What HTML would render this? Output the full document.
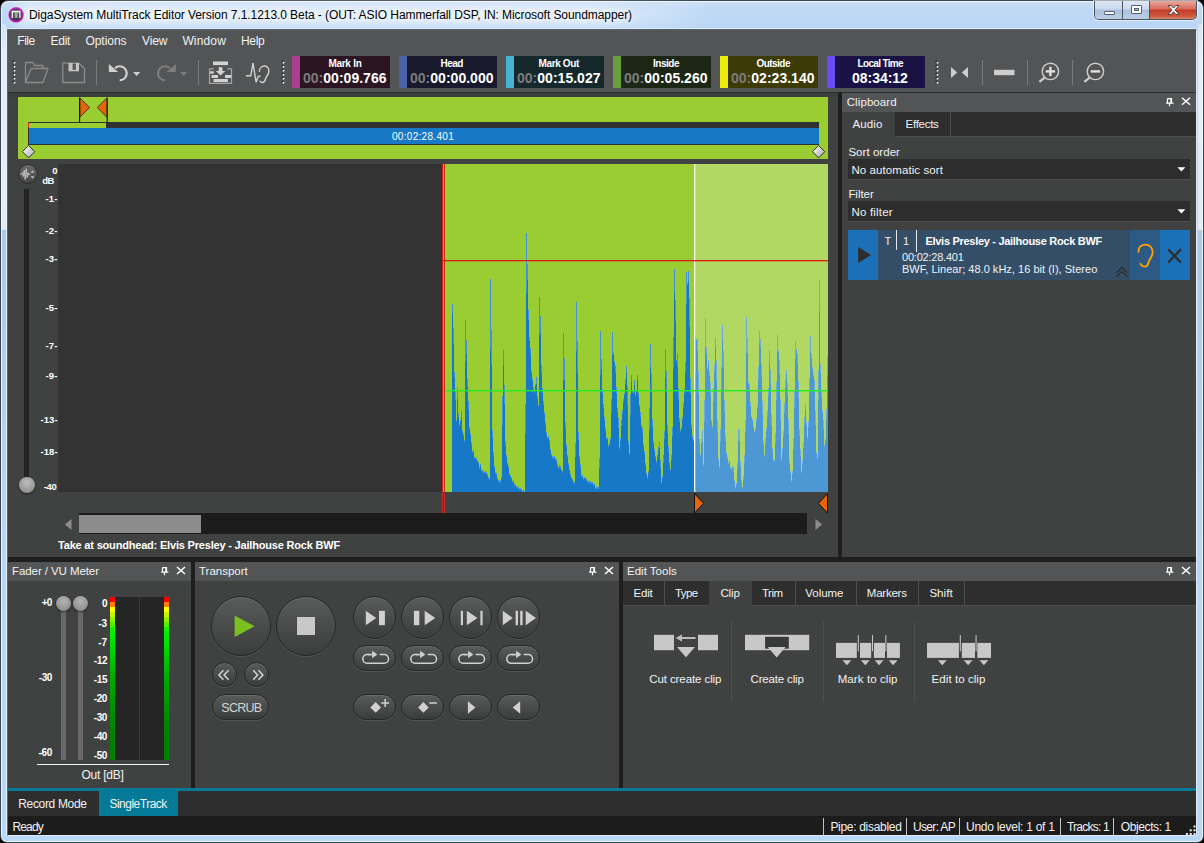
<!DOCTYPE html>
<html lang="en"><head><meta charset="utf-8"><title>DigaSystem MultiTrack Editor</title>
<style>
html,body{margin:0;padding:0;}
body{width:1204px;height:843px;background:#000;overflow:hidden;position:relative;font-family:"Liberation Sans",sans-serif;}
.b{position:absolute;box-sizing:border-box;display:block;}
.t{position:absolute;white-space:nowrap;line-height:1;display:block;}
#win{left:0;top:0;width:1204px;height:843px;border-radius:8px 8px 7px 7px;background:linear-gradient(180deg,#cfe1f5 0px,#bfd9f5 8px,#bad7f6 30px,#b9d7f7 300px,#b8d8f8 843px);border:1px solid #3a4654;box-shadow:inset 0 0 0 1px #eef5fc;}
</style></head><body>
<div class="b" id="win"></div>
<div class="b" style="left:14px;top:5px;width:700px;height:20px;border-radius:10px;background:linear-gradient(90deg,rgba(255,255,255,.62) 0,rgba(255,255,255,.62) 80%,rgba(255,255,255,0) 100%);filter:blur(6px);"></div>
<div class="b" style="left:2px;top:24px;width:4px;height:206px;background:linear-gradient(180deg,#d4e3f4 0,#e4edf8 30px,#e2ebf7 100%);"></div>
<div class="b" style="left:1198px;top:24px;width:4px;height:206px;background:linear-gradient(180deg,#d4e3f4 0,#e4edf8 30px,#e2ebf7 100%);"></div>
<div class="b" style="left:2px;top:230px;width:4px;height:330px;background:linear-gradient(180deg,#a9c9ec 0,#b8d8f8 100%);"></div>
<div class="b" style="left:1198px;top:230px;width:4px;height:330px;background:linear-gradient(180deg,#a9c9ec 0,#b8d8f8 100%);"></div>

<div class="b" style="left:7px;top:29px;width:1190px;height:807px;background:#404242;border:1px solid #5a6470;border-right-color:#dfeaf6;border-bottom-color:#dfeaf6;"></div>
<div class="b" style="left:6px;top:28px;width:1px;height:808px;background:#e6f0fb;"></div>
<div class="b" style="left:6px;top:28px;width:1191px;height:1px;background:#dbe8f7;"></div>
<svg class="b" style="left:6px;top:5px;" width="20" height="20" viewBox="0 0 20 20"><defs><radialGradient id="ig" cx="50%" cy="35%" r="65%"><stop offset="0" stop-color="#5e5c60"/><stop offset="1" stop-color="#333136"/></radialGradient></defs><circle cx="10.100" cy="9.800" r="7.900" fill="#e23ce2" fill-opacity="0.350"/><circle cx="10.100" cy="9.800" r="6.900" fill="url(#ig)" stroke="#c81cc8" stroke-width="1.500"/><rect x="8.700" y="7" width="2.900" height="5.900" fill="#a4a4a4"/><path d="M6.300 12.900V6.500h7.600v6.400" fill="none" stroke="#fff" stroke-width="1.300"/></svg>
<span class="t" id="t0" style="left:29px;top:9px;font-size:12px;color:#000;letter-spacing:-0.067px;text-shadow:0 0 6px #fff,0 0 10px #fff,0 0 14px #fff;">DigaSystem MultiTrack Editor Version 7.1.1213.0 Beta - (OUT: ASIO Hammerfall DSP, IN: Microsoft Soundmapper)</span>
<div class="b" style="left:1094px;top:1px;width:103px;height:19px;border:1px solid #4b5561;border-top:none;border-radius:0 0 5px 5px;overflow:hidden;box-shadow:0 0 0 1px rgba(255,255,255,.55);"><div class="b" style="left:0;top:0;width:28px;height:18px;background:linear-gradient(180deg,#dfe9f5 0,#c9d9ec 45%,#a9bfdb 50%,#bccfe6 100%);border-right:1px solid #4b5561;"></div><div class="b" style="left:28px;top:0;width:27px;height:18px;background:linear-gradient(180deg,#dfe9f5 0,#c9d9ec 45%,#a9bfdb 50%,#bccfe6 100%);border-right:1px solid #4b5561;"></div><div class="b" style="left:55px;top:0;width:47px;height:18px;background:linear-gradient(180deg,#e9a99c 0,#d8695a 45%,#c33a28 50%,#cf5a3e 85%,#d98a6a 100%);"></div></div>
<svg class="b" style="left:1094px;top:0px;" width="103" height="20" viewBox="0 0 103 20"><rect x="10.5" y="11.5" width="10" height="3" rx="0.5" fill="#fff" stroke="#52606f" stroke-width="1"/><rect x="37.5" y="5.5" width="10" height="8" rx="0.5" fill="#fff" stroke="#52606f" stroke-width="1"/><rect x="40.5" y="8.5" width="4" height="2" fill="#9fb4cf" stroke="#52606f" stroke-width="1"/><path d="M74 5.5h3.2l2.3 2.6 2.3-2.6H85l-3.9 4.4 3.9 4.6h-3.2l-2.3-2.8-2.3 2.8H74l3.9-4.6z" fill="#fff" stroke="#5a3a3a" stroke-width="1" stroke-linejoin="round"/></svg>
<div class="b" style="left:8px;top:30px;width:1188px;height:62px;background:#535455;"></div>
<div class="b" style="left:8px;top:92px;width:1188px;height:1px;background:#2a2b2b;"></div>
<span class="t" id="t1" style="left:17.3px;top:35px;font-size:12px;color:#f2f2f2;letter-spacing:-0.486px;">File</span>
<span class="t" id="t2" style="left:50.6px;top:35px;font-size:12px;color:#f2f2f2;letter-spacing:-0.322px;">Edit</span>
<span class="t" id="t3" style="left:85.4px;top:35px;font-size:12px;color:#f2f2f2;letter-spacing:-0.023px;">Options</span>
<span class="t" id="t4" style="left:142px;top:35px;font-size:12px;color:#f2f2f2;letter-spacing:-0.124px;">View</span>
<span class="t" id="t5" style="left:182.4px;top:35px;font-size:12px;color:#f2f2f2;letter-spacing:0.152px;">Window</span>
<span class="t" id="t6" style="left:241px;top:35px;font-size:12px;color:#f2f2f2;letter-spacing:-0.297px;">Help</span>
<div class="b" style="left:292px;top:56px;width:98px;height:32px;background:#2b1522;"></div>
<div class="b" style="left:292px;top:56px;width:8px;height:32px;background:#a8408e;"></div>
<div class="b" style="left:399px;top:56px;width:98px;height:32px;background:#181a2c;"></div>
<div class="b" style="left:399px;top:56px;width:8px;height:32px;background:#4a62ac;"></div>
<div class="b" style="left:506px;top:56px;width:98px;height:32px;background:#15292c;"></div>
<div class="b" style="left:506px;top:56px;width:8px;height:32px;background:#46b4d2;"></div>
<div class="b" style="left:613px;top:56px;width:98px;height:32px;background:#1c2614;"></div>
<div class="b" style="left:613px;top:56px;width:8px;height:32px;background:#6a9e3a;"></div>
<div class="b" style="left:720px;top:56px;width:98px;height:32px;background:#3c3a06;"></div>
<div class="b" style="left:720px;top:56px;width:8px;height:32px;background:#ecec10;"></div>
<div class="b" style="left:827px;top:56px;width:98px;height:32px;background:#1a1244;"></div>
<div class="b" style="left:827px;top:56px;width:8px;height:32px;background:#6a4cf6;"></div>
<svg class="b" style="left:0px;top:0px;" width="1204" height="100" viewBox="0 0 1204 100"><rect x="12.5" y="60.7" width="2" height="2" fill="#26282a"/><rect x="13.7" y="61.9" width="1.600" height="1.600" fill="#fff"/><rect x="12.5" y="64.7" width="2" height="2" fill="#26282a"/><rect x="13.7" y="65.9" width="1.600" height="1.600" fill="#fff"/><rect x="12.5" y="68.7" width="2" height="2" fill="#26282a"/><rect x="13.7" y="69.9" width="1.600" height="1.600" fill="#fff"/><rect x="12.5" y="72.7" width="2" height="2" fill="#26282a"/><rect x="13.7" y="73.9" width="1.600" height="1.600" fill="#fff"/><rect x="12.5" y="76.7" width="2" height="2" fill="#26282a"/><rect x="13.7" y="77.9" width="1.600" height="1.600" fill="#fff"/><rect x="12.5" y="80.7" width="2" height="2" fill="#26282a"/><rect x="13.7" y="81.9" width="1.600" height="1.600" fill="#fff"/><rect x="281.5" y="60.7" width="2" height="2" fill="#26282a"/><rect x="282.7" y="61.9" width="1.600" height="1.600" fill="#fff"/><rect x="281.5" y="64.7" width="2" height="2" fill="#26282a"/><rect x="282.7" y="65.9" width="1.600" height="1.600" fill="#fff"/><rect x="281.5" y="68.7" width="2" height="2" fill="#26282a"/><rect x="282.7" y="69.9" width="1.600" height="1.600" fill="#fff"/><rect x="281.5" y="72.7" width="2" height="2" fill="#26282a"/><rect x="282.7" y="73.9" width="1.600" height="1.600" fill="#fff"/><rect x="281.5" y="76.7" width="2" height="2" fill="#26282a"/><rect x="282.7" y="77.9" width="1.600" height="1.600" fill="#fff"/><rect x="281.5" y="80.7" width="2" height="2" fill="#26282a"/><rect x="282.7" y="81.9" width="1.600" height="1.600" fill="#fff"/><rect x="935.5" y="60.7" width="2" height="2" fill="#26282a"/><rect x="936.7" y="61.9" width="1.600" height="1.600" fill="#fff"/><rect x="935.5" y="64.7" width="2" height="2" fill="#26282a"/><rect x="936.7" y="65.9" width="1.600" height="1.600" fill="#fff"/><rect x="935.5" y="68.7" width="2" height="2" fill="#26282a"/><rect x="936.7" y="69.9" width="1.600" height="1.600" fill="#fff"/><rect x="935.5" y="72.7" width="2" height="2" fill="#26282a"/><rect x="936.7" y="73.9" width="1.600" height="1.600" fill="#fff"/><rect x="935.5" y="76.7" width="2" height="2" fill="#26282a"/><rect x="936.7" y="77.9" width="1.600" height="1.600" fill="#fff"/><rect x="935.5" y="80.7" width="2" height="2" fill="#26282a"/><rect x="936.7" y="81.9" width="1.600" height="1.600" fill="#fff"/><path d="M25.5 82.5V62.5h7.5l1.5 3h8.5v3.5M25.5 82.5l5.5-14h17l-5 14z" fill="none" stroke="#8a8a8a" stroke-width="1.3" stroke-linejoin="round"/><path d="M62.8 63.2h16.2l5.5 5.3v14h-21.7z" fill="none" stroke="#8a8a8a" stroke-width="1.3"/><rect x="68.5" y="63" width="10.5" height="8.3" fill="#c4c4c4"/><rect x="72.6" y="63.5" width="3.2" height="6.3" fill="#535455"/><rect x="96" y="60" width="1" height="25" fill="#777878"/><rect x="198" y="60" width="1" height="25" fill="#777878"/><rect x="982" y="60" width="1" height="25" fill="#777878"/><rect x="1027" y="60" width="1" height="25" fill="#777878"/><rect x="1072" y="60" width="1" height="25" fill="#777878"/><path d="M115 68.100A7 7 0 1 1 119.700 80.300" fill="none" stroke="#d0d0d0" stroke-width="2.100"/><path d="M108.900 64v8.100h9.200z" fill="#d0d0d0"/><path d="M133.100 72h7.200l-3.600 4z" fill="#d0d0d0"/><path d="M169.700 68.100A7 7 0 1 0 165 80.300" fill="none" stroke="#7d7d7d" stroke-width="2.100"/><path d="M175.800 64v8.100h-9.200z" fill="#7d7d7d"/><path d="M180.100 72h7.200l-3.600 4z" fill="#7d7d7d"/><rect x="213" y="61.500" width="15" height="3.600" fill="#d2d2d2"/><path d="M213.800 68.800h-4.300v14.600h22v-14.600h-4.300" fill="none" stroke="#a4a4a4" stroke-width="1.200"/><path d="M218.700 67.200h3.700v3.800h3l-4.850 4.400-4.850-4.400h3z" fill="#d2d2d2"/><rect x="210" y="71.300" width="3.800" height="2.300" fill="#d2d2d2"/><rect x="211.600" y="75" width="6.400" height="3" fill="#d2d2d2"/><rect x="225" y="75" width="6.200" height="3" fill="#d2d2d2"/><rect x="213.500" y="79" width="14.500" height="3.100" fill="#d2d2d2"/><path d="M246 75.800h4.800l2.200-12.600 3.100 19 2-5.700 2.400-0.700" fill="none" stroke="#d2d2d2" stroke-width="1.400" stroke-linejoin="miter"/><path d="M259.400 71.200c0.200-6.700 9.600-7 9.500 0c-0.100 3.600-2.400 4.500-3.200 7c-0.700 2.400-0.900 4.200-3.200 4.300c-1.200 0-2-0.500-2.400-1.300" fill="none" stroke="#d2d2d2" stroke-width="1.400" stroke-linecap="round"/><path d="M951 67l6.200 5.500-6.200 5.500zM968 67l-6.200 5.500 6.200 5.500z" fill="#cdcdcd"/><rect x="994" y="69.800" width="20.5" height="5.400" fill="#cdcdcd"/><circle cx="1050.4" cy="71.4" r="8.2" fill="none" stroke="#cdcdcd" stroke-width="1.4"/><path d="M1045.2 77.200l-5.800 4.600" stroke="#cdcdcd" stroke-width="2.2" fill="none"/><rect x="1045.7" y="70.2" width="9.4" height="2.4" fill="#e0e0e0"/><rect x="1049.2" y="66.700" width="2.4" height="9.4" fill="#e0e0e0"/><circle cx="1095.4" cy="71.4" r="8.2" fill="none" stroke="#cdcdcd" stroke-width="1.4"/><path d="M1090.2 77.200l-5.800 4.600" stroke="#cdcdcd" stroke-width="2.2" fill="none"/><rect x="1090.7" y="70.2" width="9.4" height="2.4" fill="#e0e0e0"/></svg>
<span class="t" id="t7" style="left:328.4px;top:59px;font-size:10px;color:#fff;font-weight:bold;letter-spacing:-0.274px;">Mark In</span>
<span class="t" id="t8" style="left:303px;top:71px;font-size:14px;color:#fff;font-weight:bold;letter-spacing:0.017px;"><span style="color:#7c7c7c">00:</span>00:09.766</span>
<span class="t" id="t9" style="left:440.5px;top:59px;font-size:10px;color:#fff;font-weight:bold;letter-spacing:-0.563px;">Head</span>
<span class="t" id="t10" style="left:410px;top:71px;font-size:14px;color:#fff;font-weight:bold;letter-spacing:0.017px;"><span style="color:#7c7c7c">00:</span>00:00.000</span>
<span class="t" id="t11" style="left:538.5px;top:59px;font-size:10px;color:#fff;font-weight:bold;letter-spacing:-0.355px;">Mark Out</span>
<span class="t" id="t12" style="left:517px;top:71px;font-size:14px;color:#fff;font-weight:bold;letter-spacing:0.017px;"><span style="color:#7c7c7c">00:</span>00:15.027</span>
<span class="t" id="t13" style="left:653px;top:59px;font-size:10px;color:#fff;font-weight:bold;letter-spacing:-0.484px;">Inside</span>
<span class="t" id="t14" style="left:624px;top:71px;font-size:14px;color:#fff;font-weight:bold;letter-spacing:0.017px;"><span style="color:#7c7c7c">00:</span>00:05.260</span>
<span class="t" id="t15" style="left:756.4px;top:59px;font-size:10px;color:#fff;font-weight:bold;letter-spacing:-0.519px;">Outside</span>
<span class="t" id="t16" style="left:731px;top:71px;font-size:14px;color:#fff;font-weight:bold;letter-spacing:0.017px;"><span style="color:#7c7c7c">00:</span>02:23.140</span>
<span class="t" id="t17" style="left:857.5px;top:59px;font-size:10px;color:#fff;font-weight:bold;letter-spacing:-0.656px;">Local Time</span>
<span class="t" id="t18" style="left:852px;top:71px;font-size:14px;color:#fff;font-weight:bold;letter-spacing:-0.031px;">08:34:12</span>
<div class="b" style="left:8px;top:93px;width:830px;height:4px;background:#3c3e3e;"></div>
<div class="b" style="left:18px;top:97px;width:810px;height:62px;background:#9acd32;"></div>
<div class="b" style="left:28px;top:121.5px;width:791px;height:23px;background:#303232;"></div>
<div class="b" style="left:29px;top:122.5px;width:76.5px;height:5px;background:#9acd32;"></div>
<div class="b" style="left:29px;top:127.5px;width:790px;height:16.5px;background:#1878c8;"></div>
<span class="t" id="t19" style="left:392px;top:132px;font-size:10px;color:#fff;letter-spacing:0.301px;">00:02:28.401</span>
<svg class="b" style="left:0px;top:90px;" width="1204" height="75" viewBox="0 90 1204 75"><rect x="28" y="122.500" width="1" height="5" fill="#e03010"/><path d="M79.600 97.500v25M107.200 97.500v25" stroke="#111" stroke-width="1.100"/><path d="M80 98l9.600 9.500-9.600 9.500z" fill="#e8640a" stroke="#111" stroke-width="0.700"/><path d="M106.800 98l-9.600 9.500 9.600 9.500z" fill="#e8640a" stroke="#111" stroke-width="0.700"/><defs><linearGradient id="dg" x1="0" y1="0" x2="1" y2="1"><stop offset="0.200" stop-color="#f4f4f4"/><stop offset="0.500" stop-color="#d0d0d0"/><stop offset="0.900" stop-color="#b4b4b4"/></linearGradient></defs><path d="M28.6 145.500l6.200 6.200-6.200 6.200-6.200-6.200z" fill="url(#dg)" stroke="#1c1c1c" stroke-width="0.900"/><path d="M818.6 145.500l6.200 6.200-6.200 6.200-6.200-6.200z" fill="url(#dg)" stroke="#1c1c1c" stroke-width="0.900"/></svg>
<div class="b" style="left:58px;top:164px;width:770px;height:328px;background:#333333;"></div>
<div class="b" style="left:443px;top:164px;width:385px;height:328px;background:#9acd32;"></div>
<svg class="b" style="left:0px;top:160px;" width="1204" height="360" viewBox="0 160 1204 360"><path d="M452 492V304h1V328h1V372h1V390h1V420h1V387h1V413h1V424h1V420h1V410h1V430h1V434h1V440h1V320h1V340h1V379h1V401h1V427h1V433h1V442h1V451h1V450h1V457h1V457h1V458h1V460h1V462h1V467h1V464h1V469h1V470h1V471h1V472h1V471h1V472h1V474h1V477h1V478h1V279h1V330h1V430h1V452h1V466h1V472h1V473h1V478h1V480h1V481h1V480h1V477h1V396h1V350h1V385h1V441h1V455h1V462h1V466h1V473h1V475h1V477h1V481h1V480h1V484h1V484h1V486h1V486h1V487h1V488h1V488h1V489h1V490h1V490h1V491h1V404h1V233h1V264h1V310h1V337h1V348h1V370h1V378h1V387h1V391h1V384h1V377h1V396h1V405h1V297h1V316h1V365h1V388h1V401h1V412h1V422h1V432h1V437h1V436h1V440h1V449h1V454h1V456h1V457h1V456h1V458h1V459h1V464h1V467h1V465h1V466h1V469h1V471h1V333h1V358h1V422h1V444h1V455h1V463h1V469h1V474h1V477h1V479h1V481h1V482h1V443h1V302h1V341h1V432h1V456h1V464h1V475h1V475h1V478h1V477h1V477h1V479h1V480h1V481h1V481h1V481h1V482h1V482h1V484h1V483h1V488h1V486h1V487h1V487h1V458h1V331h1V359h1V389h1V404h1V417h1V428h1V437h1V438h1V445h1V443h1V438h1V399h1V332h1V352h1V361h1V366h1V387h1V408h1V418h1V447h1V438h1V420h1V410h1V399h1V393h1V379h1V366h1V386h1V441h1V453h1V394h1V375h1V391h1V391h1V380h1V394h1V390h1V375h1V393h1V405h1V412h1V425h1V428h1V444h1V451h1V463h1V473h1V477h1V471h1V408h1V344h1V374h1V419h1V441h1V449h1V456h1V461h1V455h1V447h1V442h1V460h1V482h1V476h1V455h1V431h1V349h1V371h1V425h1V446h1V462h1V469h1V455h1V427h1V337h1V269h1V300h1V360h1V354h1V388h1V418h1V430h1V427h1V417h1V403h1V389h1V362h1V272h1V283h1V271h1V298h1V378h1V425h1V436h1V440h1V440h1V337h1V339h1V339h1V371h1V439h1V454h1V439h1V430h1V464h1V400h1V318h1V347h1V368h1V360h1V372h1V382h1V420h1V426h1V388h1V364h1V338h1V360h1V420h1V458h1V466h1V429h1V367h1V325h1V351h1V400h1V435h1V452h1V457h1V462h1V460h1V467h1V468h1V466h1V467h1V480h1V487h1V483h1V463h1V429h1V430h1V461h1V480h1V487h1V476h1V455h1V420h1V317h1V338h1V382h1V384h1V402h1V416h1V419h1V426h1V431h1V428h1V418h1V405h1V366h1V331h1V339h1V364h1V401h1V441h1V455h1V438h1V428h1V411h1V388h1V350h1V370h1V414h1V448h1V459h1V460h1V433h1V382h1V335h1V350h1V360h1V399h1V459h1V448h1V431h1V403h1V380h1V370h1V383h1V419h1V461h1V471h1V480h1V471h1V438h1V391h1V341h1V349h1V354h1V381h1V429h1V449h1V471h1V460h1V442h1V417h1V404h1V422h1V437h1V421h1V378h1V336h1V354h1V367h1V373h1V380h1V411h1V452h1V457h1V370h1V280h1V364h1V391h1V410h1V420h1V445h1V439h1V409h1V356h1V492z" fill="#3f94dc"/><path d="M452 492V313h1V344h1V378h1V400h1V422h1V399h1V417h1V426h1V422h1V417h1V432h1V436h1V442h1V362h1V354h1V387h1V410h1V429h1V436h1V445h1V453h1V452h1V459h1V459h1V460h1V462h1V464h1V469h1V466h1V471h1V472h1V473h1V474h1V473h1V474h1V476h1V479h1V480h1V349h1V365h1V438h1V457h1V468h1V474h1V475h1V480h1V482h1V483h1V482h1V479h1V425h1V366h1V404h1V446h1V457h1V464h1V468h1V475h1V477h1V479h1V483h1V482h1V486h1V486h1V488h1V488h1V489h1V490h1V490h1V491h1V492h1V492h1V492h1V434h1V293h1V280h1V320h1V341h1V355h1V373h1V381h1V389h1V393h1V386h1V384h1V399h1V407h1V335h1V333h1V373h1V393h1V405h1V415h1V425h1V434h1V439h1V438h1V443h1V451h1V456h1V458h1V459h1V458h1V460h1V461h1V466h1V469h1V467h1V468h1V471h1V473h1V381h1V380h1V429h1V447h1V457h1V465h1V471h1V476h1V479h1V481h1V483h1V484h1V457h1V351h1V373h1V440h1V459h1V468h1V477h1V477h1V480h1V479h1V479h1V481h1V482h1V483h1V483h1V483h1V484h1V484h1V486h1V485h1V490h1V488h1V489h1V489h1V468h1V375h1V369h1V394h1V408h1V421h1V431h1V439h1V440h1V447h1V445h1V440h1V413h1V355h1V355h1V363h1V373h1V394h1V412h1V428h1V449h1V441h1V426h1V413h1V403h1V395h1V384h1V373h1V405h1V445h1V455h1V415h1V382h1V393h1V393h1V385h1V396h1V392h1V381h1V397h1V407h1V417h1V427h1V433h1V447h1V455h1V466h1V475h1V479h1V473h1V430h1V367h1V390h1V427h1V444h1V451h1V458h1V463h1V457h1V450h1V448h1V468h1V484h1V478h1V463h1V439h1V378h1V390h1V433h1V452h1V465h1V471h1V460h1V436h1V369h1V293h1V321h1V362h1V366h1V399h1V422h1V432h1V429h1V420h1V408h1V394h1V372h1V304h1V285h1V281h1V326h1V394h1V429h1V438h1V442h1V442h1V373h1V341h1V350h1V394h1V444h1V456h1V444h1V442h1V466h1V422h1V347h1V354h1V370h1V364h1V376h1V395h1V422h1V428h1V402h1V372h1V347h1V381h1V433h1V461h1V468h1V442h1V389h1V340h1V368h1V412h1V441h1V454h1V459h1V464h1V462h1V469h1V470h1V468h1V472h1V482h1V489h1V485h1V470h1V441h1V441h1V467h1V483h1V489h1V480h1V463h1V432h1V353h1V353h1V384h1V390h1V407h1V418h1V421h1V428h1V433h1V430h1V422h1V409h1V380h1V343h1V348h1V377h1V415h1V446h1V457h1V444h1V431h1V417h1V396h1V363h1V385h1V426h1V452h1V461h1V462h1V443h1V400h1V352h1V353h1V374h1V420h1V461h1V452h1V437h1V413h1V388h1V374h1V395h1V434h1V464h1V474h1V482h1V474h1V450h1V408h1V359h1V351h1V363h1V398h1V436h1V456h1V473h1V464h1V448h1V425h1V410h1V427h1V439h1V427h1V393h1V351h1V359h1V369h1V376h1V391h1V425h1V454h1V459h1V400h1V311h1V373h1V398h1V413h1V429h1V447h1V441h1V419h1V375h1V492z" fill="#1878c8"/><rect x="694" y="164" width="134" height="328" fill="#ffffff" fill-opacity="0.235"/><rect x="694" y="164" width="1.3" height="328" fill="#f4f8e8"/><rect x="443" y="390" width="385" height="1.4" fill="#22ee22"/><rect x="443" y="260" width="385" height="1.300" fill="#e01808"/><rect x="442" y="164" width="1" height="328" fill="#d81c10"/><rect x="444" y="164" width="1" height="328" fill="#d02818"/><rect x="442" y="493" width="1" height="20" fill="#c82820"/><rect x="444" y="493" width="1" height="20" fill="#c82820"/><path d="M694.500 493.500l9 9.800-9 9.800z" fill="#e8640a" stroke="#111" stroke-width="1"/><path d="M827.500 493.500l-9 9.800 9 9.800z" fill="#e8640a" stroke="#111" stroke-width="1"/></svg>
<span class="t" id="t20" style="left:52.3px;top:166px;font-size:9.5px;color:#fff;font-weight:bold;letter-spacing:-0.297px;">0</span>
<span class="t" id="t21" style="left:42.3px;top:176px;font-size:9.5px;color:#fff;font-weight:bold;letter-spacing:-0.586px;">dB</span>
<span class="t" id="t22" style="left:45.5px;top:194px;font-size:9.5px;color:#fff;font-weight:bold;letter-spacing:0.192px;">-1-</span>
<span class="t" id="t23" style="left:45.5px;top:226px;font-size:9.5px;color:#fff;font-weight:bold;letter-spacing:0.192px;">-2-</span>
<span class="t" id="t24" style="left:45.5px;top:254px;font-size:9.5px;color:#fff;font-weight:bold;letter-spacing:0.192px;">-3-</span>
<span class="t" id="t25" style="left:45.5px;top:303px;font-size:9.5px;color:#fff;font-weight:bold;letter-spacing:0.192px;">-5-</span>
<span class="t" id="t26" style="left:45.5px;top:341px;font-size:9.5px;color:#fff;font-weight:bold;letter-spacing:0.192px;">-7-</span>
<span class="t" id="t27" style="left:45.5px;top:371px;font-size:9.5px;color:#fff;font-weight:bold;letter-spacing:0.192px;">-9-</span>
<span class="t" id="t28" style="left:40.4px;top:415px;font-size:9.5px;color:#fff;font-weight:bold;letter-spacing:0.098px;">-13-</span>
<span class="t" id="t29" style="left:40.4px;top:447px;font-size:9.5px;color:#fff;font-weight:bold;letter-spacing:0.098px;">-18-</span>
<span class="t" id="t30" style="left:43.7px;top:482px;font-size:9.5px;color:#fff;font-weight:bold;letter-spacing:-0.311px;">-40</span>
<div class="b" style="left:24px;top:189px;width:5px;height:299px;background:#232323;"></div>
<div class="b" style="left:19px;top:477px;width:16px;height:16px;border-radius:50%;background:radial-gradient(circle at 50% 35%,#bdbdbd 0,#9a9a9a 60%,#7e7e7e 100%);box-shadow:0 1px 2px rgba(0,0,0,.6);"></div>
<div class="b" style="left:18px;top:164px;width:20px;height:20px;border-radius:50%;background:linear-gradient(180deg,#6c6c6c 0,#565656 50%,#444 100%);border:1.500px solid #2a2a2a;"></div>
<svg class="b" style="left:18px;top:164px;" width="20" height="20" viewBox="0 0 20 20"><path d="M2.400 10.200h1.200l0.800-1.600 0.900 4 0.900-6.500 1 9.500 1-11 1 9 0.900-5 0.800 2.500 0.700-1h0.800" fill="none" stroke="#c8c8c8" stroke-width="0.900" stroke-linejoin="round"/><path d="M14.500 6.200l1.900 2.600h-3.800zM14.500 14.800l1.900-2.600h-3.800z" fill="#c0c0c0"/></svg>
<div class="b" style="left:79px;top:513px;width:728px;height:21px;background:#1c1c1c;"></div>
<div class="b" style="left:79px;top:515px;width:122px;height:18px;background:#8c8c8c;"></div>
<svg class="b" style="left:60px;top:514px;" width="770" height="20" viewBox="0 0 770 20"><path d="M11.500 5l-6.500 5.500 6.500 5.500z" fill="#8c8c8c"/><path d="M755.500 5l6.500 5.500-6.500 5.500z" fill="#8c8c8c"/></svg>
<span class="t" id="t31" style="left:58px;top:540px;font-size:11px;color:#fff;font-weight:bold;letter-spacing:-0.189px;">Take at soundhead: Elvis Presley - Jailhouse Rock BWF</span>
<div class="b" style="left:838px;top:93px;width:4px;height:464px;background:#1e1e1e;"></div>
<div class="b" style="left:8px;top:557px;width:1188px;height:5px;background:#1e1e1e;"></div>
<div class="b" style="left:842px;top:93px;width:354px;height:464px;background:#404242;"></div>
<div class="b" style="left:842px;top:93px;width:354px;height:19px;background:#535455;"></div>
<span class="t" id="t32" style="left:846.7px;top:97px;font-size:11.5px;color:#f2f2f2;letter-spacing:0.096px;">Clipboard</span>
<div class="b" style="left:842px;top:112px;width:354px;height:25px;background:#2e2e2e;border-bottom:1px solid #4c4d4d;"></div>
<div class="b" style="left:842px;top:112px;width:53px;height:25px;background:#404242;"></div>
<div class="b" style="left:950px;top:112px;width:1px;height:24px;background:#4c4d4d;"></div>
<span class="t" id="t33" style="left:852.4px;top:119px;font-size:11.5px;color:#f2f2f2;letter-spacing:0.156px;">Audio</span>
<span class="t" id="t34" style="left:905.5px;top:119px;font-size:11.5px;color:#f2f2f2;letter-spacing:-0.265px;">Effects</span>
<span class="t" id="t35" style="left:848.4px;top:147px;font-size:11.5px;color:#f2f2f2;letter-spacing:0.046px;">Sort order</span>
<div class="b" style="left:848px;top:159px;width:342px;height:21px;background:#2d2d2d;border-bottom:1px solid #4c4d4d;"></div>
<span class="t" id="t36" style="left:851.4px;top:165px;font-size:11.5px;color:#f2f2f2;letter-spacing:0.087px;">No automatic sort</span>
<span class="t" id="t37" style="left:848.4px;top:189px;font-size:11.5px;color:#f2f2f2;letter-spacing:-0.044px;">Filter</span>
<div class="b" style="left:848px;top:201px;width:342px;height:21px;background:#2d2d2d;border-bottom:1px solid #4c4d4d;"></div>
<span class="t" id="t38" style="left:851.4px;top:207px;font-size:11.5px;color:#f2f2f2;letter-spacing:0.197px;">No filter</span>
<div class="b" style="left:848px;top:230px;width:342px;height:50px;background:#344e68;"></div>
<div class="b" style="left:848px;top:230px;width:30px;height:50px;background:#1c70b8;"></div>
<div class="b" style="left:1130px;top:230px;width:30px;height:50px;background:#2c5a84;"></div>
<div class="b" style="left:1160px;top:230px;width:30px;height:50px;background:#1c70b8;"></div>
<span class="t" id="t39" style="left:884.4px;top:236px;font-size:11px;color:#f2f2f2;letter-spacing:-2.234px;">T</span>
<span class="t" id="t40" style="left:903px;top:236px;font-size:11px;color:#f2f2f2;letter-spacing:-1.625px;">1</span>
<span class="t" id="t41" style="left:925.5px;top:236px;font-size:11px;color:#fff;font-weight:bold;letter-spacing:-0.296px;">Elvis Presley - Jailhouse Rock BWF</span>
<span class="t" id="t42" style="left:902px;top:252px;font-size:11px;color:#f2f2f2;letter-spacing:-0.22px;">00:02:28.401</span>
<span class="t" id="t43" style="left:902px;top:264px;font-size:11px;color:#f2f2f2;letter-spacing:0.021px;">BWF, Linear; 48.0 kHz, 16 bit (I), Stereo</span>
<svg class="b" style="left:840px;top:90px;" width="364" height="200" viewBox="840 90 364 200"><path d="M1167.5 98.6h4v4.600h1.500M1167.5 98.6v4.600h-1.500M1166 103.2h7.400M1169.5 103.2v3" fill="none" stroke="#fff" stroke-width="1.200"/><rect x="1170.3" y="98.6" width="1.300" height="4.600" fill="#fff"/><path d="M1182 97.8l8 7M1190 97.8l-8 7" stroke="#fff" stroke-width="1.500" fill="none"/><path d="M1177.400 167.300h8l-4 4.200z" fill="#fff"/><path d="M1177.400 209.300h8l-4 4.200z" fill="#fff"/><path d="M858.200 247v16l12.800-8z" fill="#2d2d2d"/><rect x="896" y="230" width="1" height="20" fill="#e8e8e8"/><rect x="916" y="230" width="1" height="22" fill="#e8e8e8"/><path d="M1138.500 251.800c-0.500-9.500 14-9.800 14.200 0.200c0.100 4.500-3.200 6.500-4.200 10.500c-0.900 3.800-2.400 4.400-4.500 4.100c-1.800-0.300-3-1.400-3.400-2.700" fill="none" stroke="#ffa000" stroke-width="1.900" stroke-linecap="round"/><path d="M1168.200 249.400l12.600 13.100M1180.800 249.400l-12.600 13.100" stroke="#2d2d2d" stroke-width="2.300" fill="none"/><path d="M1116.500 272.800l5.400-5.400 5.400 5.400M1116.500 276.800l5.400-5.400 5.400 5.400" stroke="#2d2d2d" stroke-width="1.300" fill="none"/></svg>
<div class="b" style="left:8px;top:562px;width:183px;height:226px;background:#404242;"></div>
<div class="b" style="left:8px;top:562px;width:183px;height:19px;background:#535455;"></div>
<div class="b" style="left:191px;top:562px;width:4px;height:226px;background:#1e1e1e;"></div>
<div class="b" style="left:195px;top:562px;width:424px;height:226px;background:#404242;"></div>
<div class="b" style="left:195px;top:562px;width:424px;height:19px;background:#535455;"></div>
<div class="b" style="left:619px;top:562px;width:4px;height:226px;background:#1e1e1e;"></div>
<div class="b" style="left:623px;top:562px;width:573px;height:226px;background:#404242;"></div>
<div class="b" style="left:623px;top:562px;width:573px;height:19px;background:#535455;"></div>
<span class="t" id="t44" style="left:12px;top:566px;font-size:11.5px;color:#f2f2f2;letter-spacing:-0.081px;">Fader / VU Meter</span>
<span class="t" id="t45" style="left:199px;top:566px;font-size:11.5px;color:#f2f2f2;letter-spacing:-0.011px;">Transport</span>
<span class="t" id="t46" style="left:627px;top:566px;font-size:11.5px;color:#f2f2f2;letter-spacing:0.004px;">Edit Tools</span>
<div class="b" style="left:61px;top:604px;width:5px;height:156px;background:#686868;"></div>
<div class="b" style="left:78px;top:604px;width:5px;height:156px;background:#686868;"></div>
<div class="b" style="left:56px;top:596px;width:15px;height:15px;border-radius:50%;background:radial-gradient(circle at 50% 35%,#b4b4b4 0,#999 55%,#808080 100%);box-shadow:0 1px 2px rgba(0,0,0,.55);"></div>
<div class="b" style="left:73px;top:596px;width:15px;height:15px;border-radius:50%;background:radial-gradient(circle at 50% 35%,#b4b4b4 0,#999 55%,#808080 100%);box-shadow:0 1px 2px rgba(0,0,0,.55);"></div>
<div class="b" style="left:110px;top:597px;width:5px;height:163px;background:linear-gradient(180deg,#ff0000 0px,#ff0000 5px,#ff8000 5px,#ff8000 10px,#ffff00 10px,#ffff00 15px,#c8f400 15px,#c8f400 20px,#90f000 20px,#90f000 25px,#50f000 25px,#50f000 30px,#10f000 30px,#10f000 35px,#00f000 35px,#00f000 40px,#00e800 40px,#00e800 45px,#00e000 45px,#00e000 50px,#00d800 50px,#00d800 55px,#00d000 55px,#00d000 60px,#00c800 60px,#00c800 65px,#00c000 65px,#00c000 70px,#00b800 70px,#00b800 75px,#00b000 75px,#00b000 80px,#00a800 80px,#00a800 85px,#00a400 85px,#00a400 90px,#00a000 90px,#00a000 95px,#009c00 95px,#009c00 100px,#009800 100px,#009800 105px,#009400 105px,#009400 110px,#009000 110px,#009000 115px,#008c00 115px,#008c00 120px,#008800 120px,#008800 125px,#008600 125px,#008600 130px,#008400 130px,#008400 135px,#008200 135px,#008200 140px,#008000 140px,#008000 145px,#008000 145px,#008000 150px,#008000 150px,#008000 155px,#008000 155px,#008000 160px,#008000 160px,#008000 165px);"></div>
<div class="b" style="left:164px;top:597px;width:5px;height:163px;background:linear-gradient(180deg,#ff0000 0px,#ff0000 5px,#ff8000 5px,#ff8000 10px,#ffff00 10px,#ffff00 15px,#c8f400 15px,#c8f400 20px,#90f000 20px,#90f000 25px,#50f000 25px,#50f000 30px,#10f000 30px,#10f000 35px,#00f000 35px,#00f000 40px,#00e800 40px,#00e800 45px,#00e000 45px,#00e000 50px,#00d800 50px,#00d800 55px,#00d000 55px,#00d000 60px,#00c800 60px,#00c800 65px,#00c000 65px,#00c000 70px,#00b800 70px,#00b800 75px,#00b000 75px,#00b000 80px,#00a800 80px,#00a800 85px,#00a400 85px,#00a400 90px,#00a000 90px,#00a000 95px,#009c00 95px,#009c00 100px,#009800 100px,#009800 105px,#009400 105px,#009400 110px,#009000 110px,#009000 115px,#008c00 115px,#008c00 120px,#008800 120px,#008800 125px,#008600 125px,#008600 130px,#008400 130px,#008400 135px,#008200 135px,#008200 140px,#008000 140px,#008000 145px,#008000 145px,#008000 150px,#008000 150px,#008000 155px,#008000 155px,#008000 160px,#008000 160px,#008000 165px);"></div>
<div class="b" style="left:115px;top:597px;width:49px;height:163px;background:#252525;"></div>
<div class="b" style="left:139px;top:597px;width:1px;height:163px;background:#3a3a3a;"></div>
<span class="t" id="t47" style="left:102px;top:599px;font-size:10px;color:#fff;font-weight:bold;letter-spacing:-0.562px;">0</span>
<span class="t" id="t48" style="left:98.2px;top:619px;font-size:10px;color:#fff;font-weight:bold;letter-spacing:0.047px;">-3</span>
<span class="t" id="t49" style="left:98.2px;top:638px;font-size:10px;color:#fff;font-weight:bold;letter-spacing:0.047px;">-7</span>
<span class="t" id="t50" style="left:93.7px;top:656px;font-size:10px;color:#fff;font-weight:bold;letter-spacing:-0.284px;">-12</span>
<span class="t" id="t51" style="left:93.7px;top:675px;font-size:10px;color:#fff;font-weight:bold;letter-spacing:-0.284px;">-15</span>
<span class="t" id="t52" style="left:93.8px;top:694px;font-size:10px;color:#fff;font-weight:bold;letter-spacing:-0.484px;">-20</span>
<span class="t" id="t53" style="left:93.8px;top:713px;font-size:10px;color:#fff;font-weight:bold;letter-spacing:-0.484px;">-30</span>
<span class="t" id="t54" style="left:93.8px;top:732px;font-size:10px;color:#fff;font-weight:bold;letter-spacing:-0.484px;">-40</span>
<span class="t" id="t55" style="left:93.8px;top:751px;font-size:10px;color:#fff;font-weight:bold;letter-spacing:-0.484px;">-50</span>
<span class="t" id="t56" style="left:41.8px;top:598px;font-size:10px;color:#fff;font-weight:bold;letter-spacing:-0.803px;">+0</span>
<span class="t" id="t57" style="left:38.7px;top:673px;font-size:10px;color:#fff;font-weight:bold;letter-spacing:-0.384px;">-30</span>
<span class="t" id="t58" style="left:38.6px;top:748px;font-size:10px;color:#fff;font-weight:bold;letter-spacing:-0.351px;">-60</span>
<div class="b" style="left:37px;top:764px;width:132px;height:1px;background:#f4f4f4;"></div>
<span class="t" id="t59" style="left:81.5px;top:769px;font-size:12px;color:#f2f2f2;letter-spacing:-0.229px;">Out [dB]</span>
<div class="b" style="left:211px;top:596px;width:60px;height:60px;border-radius:30px;background:linear-gradient(180deg,#5a5c5c 0,#4b4d4d 45%,#3b3d3d 100%);border:1px solid #262727;box-shadow:0 1px 0 rgba(255,255,255,.10),inset 0 1px 0 rgba(255,255,255,.10);"></div>
<div class="b" style="left:276px;top:596px;width:60px;height:60px;border-radius:30px;background:linear-gradient(180deg,#5a5c5c 0,#4b4d4d 45%,#3b3d3d 100%);border:1px solid #262727;box-shadow:0 1px 0 rgba(255,255,255,.10),inset 0 1px 0 rgba(255,255,255,.10);"></div>
<div class="b" style="left:353px;top:596px;width:43px;height:43px;border-radius:21.5px;background:linear-gradient(180deg,#5a5c5c 0,#4b4d4d 45%,#3b3d3d 100%);border:1px solid #262727;box-shadow:0 1px 0 rgba(255,255,255,.10),inset 0 1px 0 rgba(255,255,255,.10);"></div>
<div class="b" style="left:353px;top:645px;width:43px;height:26px;border-radius:13px;background:linear-gradient(180deg,#5a5c5c 0,#4b4d4d 45%,#3b3d3d 100%);border:1px solid #262727;box-shadow:0 1px 0 rgba(255,255,255,.10),inset 0 1px 0 rgba(255,255,255,.10);"></div>
<div class="b" style="left:353px;top:694px;width:43px;height:26px;border-radius:13px;background:linear-gradient(180deg,#5a5c5c 0,#4b4d4d 45%,#3b3d3d 100%);border:1px solid #262727;box-shadow:0 1px 0 rgba(255,255,255,.10),inset 0 1px 0 rgba(255,255,255,.10);"></div>
<div class="b" style="left:401px;top:596px;width:43px;height:43px;border-radius:21.5px;background:linear-gradient(180deg,#5a5c5c 0,#4b4d4d 45%,#3b3d3d 100%);border:1px solid #262727;box-shadow:0 1px 0 rgba(255,255,255,.10),inset 0 1px 0 rgba(255,255,255,.10);"></div>
<div class="b" style="left:401px;top:645px;width:43px;height:26px;border-radius:13px;background:linear-gradient(180deg,#5a5c5c 0,#4b4d4d 45%,#3b3d3d 100%);border:1px solid #262727;box-shadow:0 1px 0 rgba(255,255,255,.10),inset 0 1px 0 rgba(255,255,255,.10);"></div>
<div class="b" style="left:401px;top:694px;width:43px;height:26px;border-radius:13px;background:linear-gradient(180deg,#5a5c5c 0,#4b4d4d 45%,#3b3d3d 100%);border:1px solid #262727;box-shadow:0 1px 0 rgba(255,255,255,.10),inset 0 1px 0 rgba(255,255,255,.10);"></div>
<div class="b" style="left:449px;top:596px;width:43px;height:43px;border-radius:21.5px;background:linear-gradient(180deg,#5a5c5c 0,#4b4d4d 45%,#3b3d3d 100%);border:1px solid #262727;box-shadow:0 1px 0 rgba(255,255,255,.10),inset 0 1px 0 rgba(255,255,255,.10);"></div>
<div class="b" style="left:449px;top:645px;width:43px;height:26px;border-radius:13px;background:linear-gradient(180deg,#5a5c5c 0,#4b4d4d 45%,#3b3d3d 100%);border:1px solid #262727;box-shadow:0 1px 0 rgba(255,255,255,.10),inset 0 1px 0 rgba(255,255,255,.10);"></div>
<div class="b" style="left:449px;top:694px;width:43px;height:26px;border-radius:13px;background:linear-gradient(180deg,#5a5c5c 0,#4b4d4d 45%,#3b3d3d 100%);border:1px solid #262727;box-shadow:0 1px 0 rgba(255,255,255,.10),inset 0 1px 0 rgba(255,255,255,.10);"></div>
<div class="b" style="left:497px;top:596px;width:43px;height:43px;border-radius:21.5px;background:linear-gradient(180deg,#5a5c5c 0,#4b4d4d 45%,#3b3d3d 100%);border:1px solid #262727;box-shadow:0 1px 0 rgba(255,255,255,.10),inset 0 1px 0 rgba(255,255,255,.10);"></div>
<div class="b" style="left:497px;top:645px;width:43px;height:26px;border-radius:13px;background:linear-gradient(180deg,#5a5c5c 0,#4b4d4d 45%,#3b3d3d 100%);border:1px solid #262727;box-shadow:0 1px 0 rgba(255,255,255,.10),inset 0 1px 0 rgba(255,255,255,.10);"></div>
<div class="b" style="left:497px;top:694px;width:43px;height:26px;border-radius:13px;background:linear-gradient(180deg,#5a5c5c 0,#4b4d4d 45%,#3b3d3d 100%);border:1px solid #262727;box-shadow:0 1px 0 rgba(255,255,255,.10),inset 0 1px 0 rgba(255,255,255,.10);"></div>
<div class="b" style="left:212px;top:662px;width:25px;height:25px;border-radius:12.5px;background:linear-gradient(180deg,#5a5c5c 0,#4b4d4d 45%,#3b3d3d 100%);border:1px solid #262727;box-shadow:0 1px 0 rgba(255,255,255,.10),inset 0 1px 0 rgba(255,255,255,.10);"></div>
<div class="b" style="left:244px;top:662px;width:25px;height:25px;border-radius:12.5px;background:linear-gradient(180deg,#5a5c5c 0,#4b4d4d 45%,#3b3d3d 100%);border:1px solid #262727;box-shadow:0 1px 0 rgba(255,255,255,.10),inset 0 1px 0 rgba(255,255,255,.10);"></div>
<div class="b" style="left:212px;top:694px;width:57px;height:26px;border-radius:13px;background:linear-gradient(180deg,#5a5c5c 0,#4b4d4d 45%,#3b3d3d 100%);border:1px solid #262727;box-shadow:0 1px 0 rgba(255,255,255,.10),inset 0 1px 0 rgba(255,255,255,.10);"></div>
<span class="t" id="t60" style="left:221.3px;top:702px;font-size:12.5px;color:#d4d4d4;letter-spacing:-0.713px;">SCRUB</span>
<svg class="b" style="left:0px;top:560px;" width="1204" height="230" viewBox="0 560 1204 230"><path d="M162.5 567.6h4v4.600h1.500M162.5 567.6v4.600h-1.500M161 572.2h7.400M164.5 572.2v3" fill="none" stroke="#fff" stroke-width="1.200"/><rect x="165.3" y="567.6" width="1.300" height="4.600" fill="#fff"/><path d="M177 567l8 7M185 567l-8 7" stroke="#fff" stroke-width="1.500" fill="none"/><path d="M590.5 567.6h4v4.600h1.500M590.5 567.6v4.600h-1.500M589 572.2h7.400M592.5 572.2v3" fill="none" stroke="#fff" stroke-width="1.200"/><rect x="593.3" y="567.6" width="1.300" height="4.600" fill="#fff"/><path d="M605 567l8 7M613 567l-8 7" stroke="#fff" stroke-width="1.500" fill="none"/><path d="M1167.5 567.6h4v4.600h1.500M1167.5 567.6v4.600h-1.500M1166 572.2h7.400M1169.5 572.2v3" fill="none" stroke="#fff" stroke-width="1.200"/><rect x="1170.3" y="567.6" width="1.300" height="4.600" fill="#fff"/><path d="M1182 567l8 7M1190 567l-8 7" stroke="#fff" stroke-width="1.500" fill="none"/><path d="M234.600 615.400v21.600l20-10.800z" fill="#7cc020"/><rect x="297" y="617" width="18" height="18" fill="#c8c8c8"/><path d="M223.400 670.300l-4.500 4.700 4.500 4.700M228.600 670.300l-4.500 4.700 4.500 4.700" fill="none" stroke="#d0d0d0" stroke-width="1.600"/><path d="M253.200 670.300l4.500 4.700-4.500 4.700M258.400 670.300l4.500 4.700-4.500 4.700" fill="none" stroke="#d0d0d0" stroke-width="1.600"/><path d="M365.800 610.800v14.400l10.400-7.200z" fill="#d0d0d0"/><rect x="379" y="610.800" width="5.900" height="14.400" fill="#d0d0d0"/><rect x="413.900" y="610.800" width="5.400" height="14.400" fill="#d0d0d0"/><path d="M424.700 610.800v14.400l10.500-7.200z" fill="#d0d0d0"/><rect x="460.800" y="610.800" width="2.200" height="14.400" fill="#d0d0d0"/><path d="M466.800 610.800v14.400l10.600-7.200z" fill="#d0d0d0"/><rect x="480.400" y="610.800" width="2.200" height="14.400" fill="#d0d0d0"/><path d="M502.800 610.800v14.400l10-7.200z" fill="#d0d0d0"/><rect x="515.600" y="610.800" width="2.400" height="14.400" fill="#d0d0d0"/><rect x="520.200" y="610.800" width="2.400" height="14.400" fill="#d0d0d0"/><path d="M525.700 610.800v14.400l10.300-7.200z" fill="#d0d0d0"/><path d="M370.4 654.600h-3.300a4.300 4.300 0 0 0 0 8.600h17.100a4.300 4.300 0 0 0 0-8.600h-4.500" fill="none" stroke="#d0d0d0" stroke-width="1.500"/><path d="M372.2 650.800v7.400l5.200-3.700z" fill="#d0d0d0"/><rect x="367.9" y="653.850" width="5.300" height="1.500" fill="#d0d0d0"/><path d="M418.4 654.600h-3.300a4.300 4.300 0 0 0 0 8.600h17.100a4.300 4.300 0 0 0 0-8.600h-4.500" fill="none" stroke="#d0d0d0" stroke-width="1.500"/><path d="M420.2 650.800v7.400l5.200-3.700z" fill="#d0d0d0"/><rect x="415.9" y="653.850" width="5.300" height="1.500" fill="#d0d0d0"/><path d="M466.4 654.600h-3.300a4.300 4.300 0 0 0 0 8.600h17.100a4.300 4.300 0 0 0 0-8.600h-4.500" fill="none" stroke="#d0d0d0" stroke-width="1.500"/><path d="M468.2 650.800v7.400l5.200-3.700z" fill="#d0d0d0"/><rect x="463.9" y="653.850" width="5.300" height="1.500" fill="#d0d0d0"/><path d="M514.4 654.600h-3.300a4.300 4.300 0 0 0 0 8.600h17.100a4.300 4.300 0 0 0 0-8.600h-4.500" fill="none" stroke="#d0d0d0" stroke-width="1.500"/><path d="M516.2 650.800v7.400l5.200-3.700z" fill="#d0d0d0"/><rect x="511.9" y="653.850" width="5.300" height="1.500" fill="#d0d0d0"/><path d="M375.700 702.100l5.300 5.300-5.300 5.300-5.300-5.300z" fill="#d0d0d0"/><path d="M381.200 703h8M385.200 699v8" stroke="#d0d0d0" stroke-width="1.500"/><path d="M423.400 702.100l5.300 5.300-5.300 5.300-5.300-5.300z" fill="#d0d0d0"/><path d="M429.200 703h7.700" stroke="#d0d0d0" stroke-width="1.500"/><path d="M467.900 701.300v12.500l7.500-6.250z" fill="#d0d0d0"/><path d="M520.200 701.300v12.500l-7.500-6.250z" fill="#d0d0d0"/></svg>
<div class="b" style="left:623px;top:581px;width:573px;height:25px;background:#2e2e2e;border-bottom:1px solid #4c4d4d;"></div>
<div class="b" style="left:709px;top:581px;width:43px;height:25px;background:#404242;"></div>
<div class="b" style="left:664px;top:581px;width:1px;height:24px;background:#4c4d4d;"></div>
<div class="b" style="left:795px;top:581px;width:1px;height:24px;background:#4c4d4d;"></div>
<div class="b" style="left:856px;top:581px;width:1px;height:24px;background:#4c4d4d;"></div>
<div class="b" style="left:918px;top:581px;width:1px;height:24px;background:#4c4d4d;"></div>
<div class="b" style="left:964px;top:581px;width:1px;height:24px;background:#4c4d4d;"></div>
<span class="t" id="t61" style="left:633.6px;top:588px;font-size:11.5px;color:#f2f2f2;letter-spacing:-0.257px;">Edit</span>
<span class="t" id="t62" style="left:675px;top:588px;font-size:11.5px;color:#f2f2f2;letter-spacing:-0.559px;">Type</span>
<span class="t" id="t63" style="left:720.4px;top:588px;font-size:11.5px;color:#f2f2f2;letter-spacing:-0.078px;">Clip</span>
<span class="t" id="t64" style="left:761.9px;top:588px;font-size:11.5px;color:#f2f2f2;letter-spacing:-0.466px;">Trim</span>
<span class="t" id="t65" style="left:805.3px;top:588px;font-size:11.5px;color:#f2f2f2;letter-spacing:-0.027px;">Volume</span>
<span class="t" id="t66" style="left:866.8px;top:588px;font-size:11.5px;color:#f2f2f2;letter-spacing:-0.233px;">Markers</span>
<span class="t" id="t67" style="left:929.4px;top:588px;font-size:11.5px;color:#f2f2f2;letter-spacing:0.057px;">Shift</span>
<span class="t" id="t68" style="left:649.2px;top:674px;font-size:11.5px;color:#f2f2f2;letter-spacing:-0.088px;">Cut create clip</span>
<span class="t" id="t69" style="left:750.5px;top:674px;font-size:11.5px;color:#f2f2f2;letter-spacing:-0.161px;">Create clip</span>
<span class="t" id="t70" style="left:837.7px;top:674px;font-size:11.5px;color:#f2f2f2;letter-spacing:0.092px;">Mark to clip</span>
<span class="t" id="t71" style="left:931.6px;top:674px;font-size:11.5px;color:#f2f2f2;letter-spacing:0.061px;">Edit to clip</span>
<div class="b" style="left:731px;top:622px;width:1px;height:80px;background:#4f5050;"></div>
<div class="b" style="left:822.5px;top:622px;width:1px;height:80px;background:#4f5050;"></div>
<div class="b" style="left:913.5px;top:622px;width:1px;height:80px;background:#4f5050;"></div>
<svg class="b" style="left:620px;top:620px;" width="400" height="60" viewBox="620 620 400 60"><rect x="654" y="634.800" width="20" height="15.400" fill="#c8c8c8"/><rect x="698" y="634.800" width="20" height="15.400" fill="#c8c8c8"/><path d="M675.500 638l6.500-3.400v2.500h13.500v1.900h-13.500v2.500z" fill="#bcbcbc"/><path d="M677 647h18l-9 10.300z" fill="#c8c8c8"/><rect x="745" y="634.800" width="64.200" height="15.400" fill="#c8c8c8"/><rect x="765.100" y="636.800" width="23.700" height="11.900" fill="#383a3a"/><path d="M767.800 647h17.800l-8.900 10.600z" fill="#c8c8c8"/><rect x="836" y="642.900" width="20.8" height="15" fill="#c8c8c8"/><rect x="860" y="642.900" width="11.2" height="15" fill="#c8c8c8"/><rect x="873.9" y="642.900" width="11.1" height="15" fill="#c8c8c8"/><rect x="887" y="642.900" width="12.9" height="15" fill="#c8c8c8"/><rect x="857.8" y="635" width="1" height="16.300" fill="#c8c8c8"/><rect x="872" y="635" width="1" height="16.300" fill="#c8c8c8"/><rect x="885.05" y="635" width="1.5" height="16.300" fill="#9c9c9c"/><path d="M842.5 660.200h8.800l-4.400 5z" fill="#c8c8c8"/><path d="M860.9 660.200h8.800l-4.400 5z" fill="#c8c8c8"/><path d="M874.7 660.200h8.800l-4.400 5z" fill="#c8c8c8"/><path d="M888.7 660.200h8.800l-4.400 5z" fill="#c8c8c8"/><rect x="927" y="642.900" width="31.9" height="15" fill="#c8c8c8"/><rect x="961.8" y="642.900" width="13.2" height="15" fill="#c8c8c8"/><rect x="977.3" y="642.900" width="13.7" height="15" fill="#c8c8c8"/><rect x="959.8" y="635" width="1" height="16.300" fill="#c8c8c8"/><rect x="975.35" y="635" width="1.5" height="16.300" fill="#9c9c9c"/><path d="M937.9 660.200h8.800l-4.400 5z" fill="#c8c8c8"/><path d="M963.7 660.200h8.800l-4.400 5z" fill="#c8c8c8"/><path d="M979.5 660.200h8.800l-4.400 5z" fill="#c8c8c8"/></svg>
<div class="b" style="left:8px;top:788px;width:1188px;height:3px;background:#047a98;"></div>
<div class="b" style="left:8px;top:791px;width:1188px;height:25px;background:#2e2e2e;"></div>
<div class="b" style="left:99px;top:791px;width:79px;height:25px;background:#047a98;"></div>
<span class="t" id="t72" style="left:18.3px;top:798px;font-size:12px;color:#f2f2f2;letter-spacing:-0.341px;">Record Mode</span>
<span class="t" id="t73" style="left:109.4px;top:798px;font-size:12px;color:#f2f2f2;letter-spacing:-0.493px;">SingleTrack</span>
<div class="b" style="left:8px;top:816px;width:1188px;height:19px;background:#1c1c1c;"></div>
<span class="t" id="t74" style="left:12.4px;top:821px;font-size:12px;color:#f2f2f2;letter-spacing:-0.817px;">Ready</span>
<span class="t" id="t75" style="left:830.4px;top:821px;font-size:12px;color:#f2f2f2;letter-spacing:-0.306px;">Pipe: disabled</span>
<span class="t" id="t76" style="left:913px;top:821px;font-size:12px;color:#f2f2f2;letter-spacing:-0.67px;">User: AP</span>
<span class="t" id="t77" style="left:966px;top:821px;font-size:12px;color:#f2f2f2;letter-spacing:-0.267px;">Undo level: 1 of 1</span>
<span class="t" id="t78" style="left:1067px;top:821px;font-size:12px;color:#f2f2f2;letter-spacing:-0.767px;">Tracks: 1</span>
<span class="t" id="t79" style="left:1120.8px;top:821px;font-size:12px;color:#f2f2f2;letter-spacing:-0.403px;">Objects: 1</span>
<div class="b" style="left:823px;top:818px;width:1px;height:17px;background:#c4c4c4;"></div>
<div class="b" style="left:906px;top:818px;width:1px;height:17px;background:#c4c4c4;"></div>
<div class="b" style="left:959px;top:818px;width:1px;height:17px;background:#c4c4c4;"></div>
<div class="b" style="left:1060px;top:818px;width:1px;height:17px;background:#c4c4c4;"></div>
<div class="b" style="left:1113px;top:818px;width:1px;height:17px;background:#c4c4c4;"></div>
<svg class="b" style="left:1184px;top:823px;" width="12" height="12" viewBox="0 0 12 12"><g fill="#ececec"><rect x="9.500" y="2.500" width="2" height="2"/><rect x="9.500" y="6.300" width="2" height="2"/><rect x="5.700" y="6.300" width="2" height="2"/><rect x="9.500" y="10" width="2" height="2"/><rect x="5.700" y="10" width="2" height="2"/><rect x="1.900" y="10" width="2" height="2"/></g></svg>
</body></html>
